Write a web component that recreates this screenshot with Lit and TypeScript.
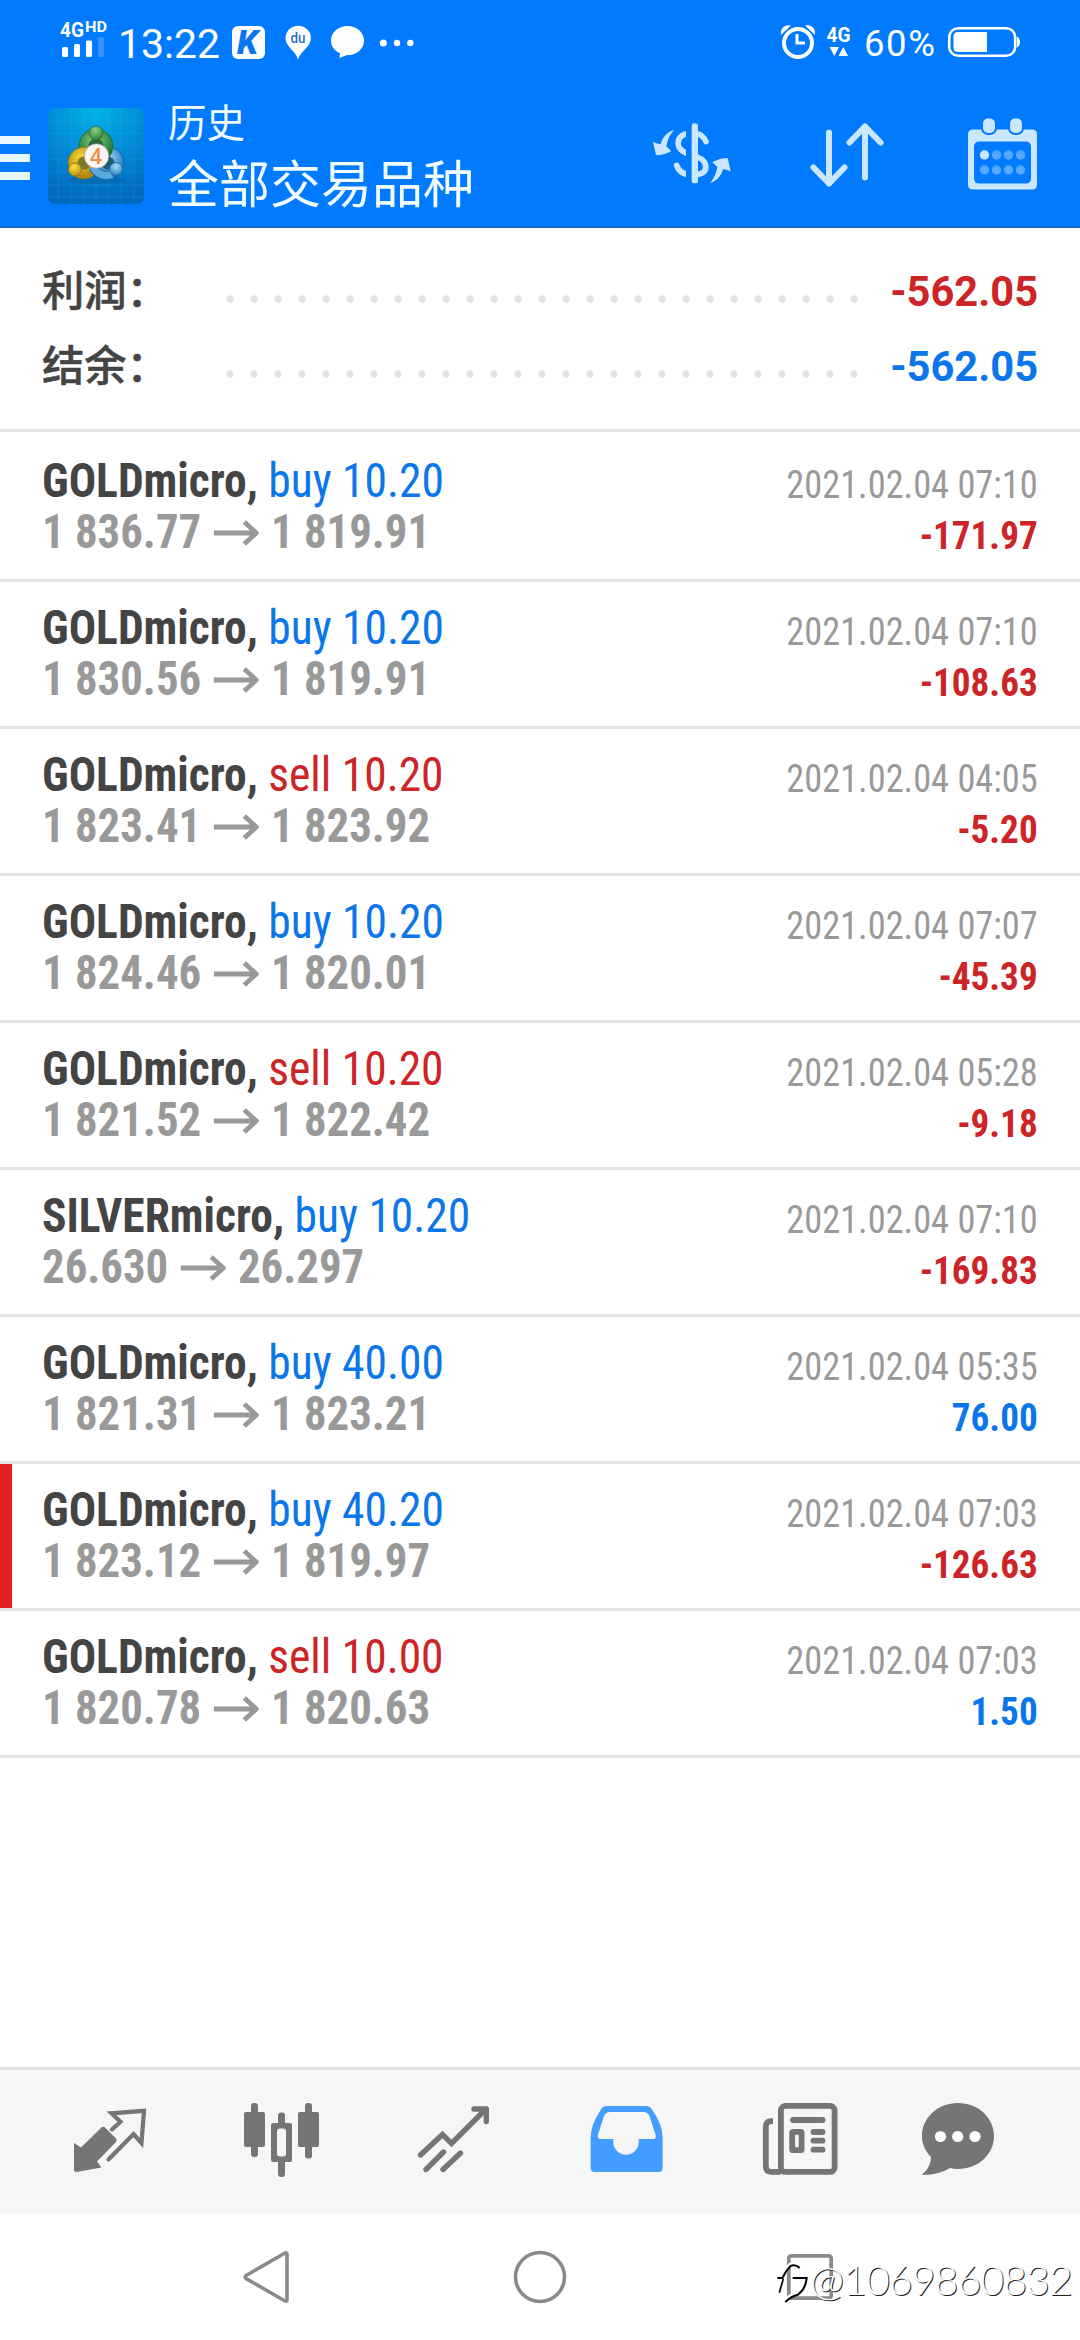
import { LitElement, html, css, svg } from "lit";
import { customElement, property } from "lit/decorators.js";
import { classMap } from "lit/directives/class-map.js";

interface Deal {
  symbol: string;
  side: "buy" | "sell";
  volume: string;
  open: string;
  close: string;
  time: string;
  profit: string;
  flagged?: boolean;
}

const DEALS: Deal[] = [
  { symbol: "GOLDmicro", side: "buy", volume: "10.20", open: "1 836.77", close: "1 819.91", time: "2021.02.04 07:10", profit: "-171.97" },
  { symbol: "GOLDmicro", side: "buy", volume: "10.20", open: "1 830.56", close: "1 819.91", time: "2021.02.04 07:10", profit: "-108.63" },
  { symbol: "GOLDmicro", side: "sell", volume: "10.20", open: "1 823.41", close: "1 823.92", time: "2021.02.04 04:05", profit: "-5.20" },
  { symbol: "GOLDmicro", side: "buy", volume: "10.20", open: "1 824.46", close: "1 820.01", time: "2021.02.04 07:07", profit: "-45.39" },
  { symbol: "GOLDmicro", side: "sell", volume: "10.20", open: "1 821.52", close: "1 822.42", time: "2021.02.04 05:28", profit: "-9.18" },
  { symbol: "SILVERmicro", side: "buy", volume: "10.20", open: "26.630", close: "26.297", time: "2021.02.04 07:10", profit: "-169.83" },
  { symbol: "GOLDmicro", side: "buy", volume: "40.00", open: "1 821.31", close: "1 823.21", time: "2021.02.04 05:35", profit: "76.00" },
  { symbol: "GOLDmicro", side: "buy", volume: "40.20", open: "1 823.12", close: "1 819.97", time: "2021.02.04 07:03", profit: "-126.63", flagged: true },
  { symbol: "GOLDmicro", side: "sell", volume: "10.00", open: "1 820.78", close: "1 820.63", time: "2021.02.04 07:03", profit: "1.50" },
];

@customElement("status-bar")
export class StatusBar extends LitElement {
  static styles = css`
    :host { display: flex; height: 84px; padding: 0 60px; align-items: flex-start; justify-content: space-between; color: #fff; font-family: Roboto, sans-serif; }
    svg { display: block; flex: none; overflow: visible; }
    .side { display: flex; height: 84px; align-items: center; }
    .clock { font-size: 41px; line-height: 84px; height: 84px; margin: 4px 0 0 10px; width: 102px; letter-spacing: 0; }
    .percent { font-size: 36.500px; line-height: 84px; height: 84px; margin: 3px 0 0 12px; width: 83px; letter-spacing: 1.600px; }
    .net { font: 700 21px Roboto, sans-serif; fill: #fff; }
    .hd { font: 700 14px Roboto, sans-serif; fill: #fff; }
    .k { font: italic 900 33px Roboto, sans-serif; fill: #0a74f5; }
    .du { font: 500 15px Roboto, sans-serif; fill: #2a6fc0; }
  `;
  render() {
    return html`
      <div class="side">
        <svg width="48" height="84" viewBox="60 0 48 84" fill="#fff">
          <text class="net" x="60" y="37" textLength="24" lengthAdjust="spacingAndGlyphs">4G</text>
          <text class="hd" x="85" y="32" textLength="22" lengthAdjust="spacingAndGlyphs">HD</text>
          <rect x="62" y="47" width="6" height="10" rx="1.5" />
          <rect x="74" y="44" width="6" height="13" rx="1.5" />
          <rect x="86" y="40.5" width="6" height="16.5" rx="1.5" />
          <rect x="98" y="37" width="6" height="20" rx="1" opacity=".2" />
        </svg>
        <span class="clock">13:22</span>
        <svg width="200" height="84" viewBox="220 0 200 84" fill="#fff">
          <rect x="232" y="26" width="33" height="33" rx="6" />
          <text class="k" x="237" y="53.5" textLength="21" lengthAdjust="spacingAndGlyphs">K</text>
          <path d="M298 59.5C296 51 285.5 47 285.5 38a12.7 12.3 0 0 1 25.4 0C311 47 300.500 51 298 59.500Z" />
          <text class="du" x="290.500" y="42.500" textLength="15" lengthAdjust="spacingAndGlyphs">du</text>
          <path d="M347.500 26c9.500 0 16.500 6.500 16.500 14.500S357 55 349 55c-2 0-3.500.3-9.500 3.300l.5-5C335 51 331 47 331 40.500 331 32.500 338 26 347.500 26Z" />
          <circle cx="383.300" cy="43" r="3.500" /><circle cx="397" cy="43" r="3.200" /><circle cx="410.300" cy="43" r="3.200" />
        </svg>
      </div>
      <div class="side">
        <svg width="72" height="84" viewBox="780 0 72 84" fill="#fff">
          <circle cx="798" cy="43" r="14" fill="none" stroke="#fff" stroke-width="4" />
          <path d="M797 34v9h8" fill="none" stroke="#fff" stroke-width="3" />
          <path d="M781 35c-1-7 4-11 10-9.500ZM815 35c1-7-4-11-10-9.500Z" />
          <text class="net" x="826.500" y="42" font-size="21" textLength="24" lengthAdjust="spacingAndGlyphs">4G</text>
          <path d="M829.500 47h9.500l-4.700 9ZM838.500 56h9.500l-4.700-9Z" />
        </svg>
        <span class="percent">60%</span>
        <svg width="73" height="84" viewBox="947 0 73 84">
          <rect x="949.200" y="28.200" width="66" height="27.600" rx="9" fill="none" stroke="#fff" stroke-width="2.600" />
          <path d="M958 32h29v20h-29q-4.500 0-4.500-4.500v-11Q953.500 32 958 32Z" fill="#fff" />
          <path d="M1017 36.500q3 1.500 3 5.500t-3 5.500Z" fill="#fff" />
        </svg>
      </div>
    `;
  }
}

@customElement("app-header")
export class AppHeader extends LitElement {
  static styles = css`
    :host { display: flex; height: 142px; align-items: center; color: #f2fbff; font-family: "Noto Sans CJK SC", sans-serif; border-bottom: 2px solid #1a66cc; box-sizing: content-box; }
    svg { display: block; flex: none; overflow: visible; }
    .menu { display: flex; flex-direction: column; gap: 10px; width: 30px; margin: 5px 18px 0 0; }
    .bar { height: 8px; background: #e6f7ff; }
    .logo { margin-top: 1px; }
    .titles { display: flex; flex-direction: column; margin: -5px 0 0 24px; flex: 1; font-weight: 400; }
    .small { font-size: 38.500px; line-height: 54px; }
    .large { font-size: 51px; line-height: 64px; margin-top: 2px; }
    .actions { display: flex; align-items: center; margin-right: 42px; }
    .sort { margin: 0 83px 0 77px; }
    .four { font: 600 21px "Open Sans", sans-serif; fill: #f08a3c; }
  `;
  render() {
    return html`
      <div class="menu"><div class="bar"></div><div class="bar"></div><div class="bar"></div></div>
      <svg class="logo" width="96" height="96" viewBox="0 0 96 96">
        <defs>
          <radialGradient id="bg" cx=".5" cy="0" r="1"><stop offset="0" stop-color="#00b4e8" /><stop offset=".55" stop-color="#0288d6" /><stop offset="1" stop-color="#0068c0" /></radialGradient>
          <radialGradient id="g" cx=".45" cy=".3" r=".8"><stop offset="0" stop-color="#8fd07a" /><stop offset="1" stop-color="#1c7a3a" /></radialGradient>
          <radialGradient id="y" cx=".4" cy=".3" r=".8"><stop offset="0" stop-color="#ffe03a" /><stop offset="1" stop-color="#b08a10" /></radialGradient>
          <radialGradient id="b" cx=".5" cy=".3" r=".8"><stop offset="0" stop-color="#a5dcf8" /><stop offset="1" stop-color="#1f78c0" /></radialGradient>
        </defs>
        <rect width="96" height="96" rx="7" fill="url(#bg)" />
        <path d="M10 0v96M23 0v96M36 0v96M48 0v96M60 0v96M73 0v96M86 0v96M0 12h96M0 25h96M0 38h96M0 51h96M0 64h96M0 77h96M0 89h96" stroke="#6fd0ff" stroke-opacity=".13" fill="none" />
        <ellipse cx="49" cy="72" rx="30" ry="4" fill="#045a9c" opacity=".4" />
        <circle cx="60" cy="55" r="11" fill="#1d5f70" stroke="#1b5f98" stroke-width="10.500" />
        <circle cx="60" cy="55" r="11" fill="none" stroke="url(#b)" stroke-width="8.800" />
        <circle cx="48" cy="38" r="12" fill="#2a6a3a" stroke="#2c6a2c" stroke-width="10.500" />
        <circle cx="48" cy="38" r="12" fill="none" stroke="url(#g)" stroke-width="8.800" />
        <circle cx="36" cy="55" r="11" fill="#7a7a28" stroke="#8a7414" stroke-width="10.500" />
        <circle cx="36" cy="55" r="11" fill="none" stroke="url(#y)" stroke-width="8.800" />
        <path d="M45 59A15 14 0 0 0 62 67" fill="none" stroke="#1b5f98" stroke-width="9" />
        <path d="M45 59A15 14 0 0 0 64 66.500" fill="none" stroke="#5ba9de" stroke-width="7.400" />
        <circle cx="48" cy="25" r="7" fill="url(#g)" stroke="#2c6a2c" stroke-width=".8" />
        <circle cx="27" cy="61.500" r="6.500" fill="url(#y)" stroke="#8a7414" stroke-width=".8" />
        <circle cx="68" cy="61" r="6.500" fill="url(#b)" stroke="#1b62a0" stroke-width=".8" />
        <circle cx="48.500" cy="48" r="12.300" fill="#f7f7f5" stroke="#9a8f80" stroke-width=".7" />
        <text class="four" x="48" y="55.500" text-anchor="middle">4</text>
      </svg>
      <div class="titles"><span class="small">历史</span><span class="large">全部交易品种</span></div>
      <div class="actions">
        <svg width="80" height="70" viewBox="30 32 240 210" fill="#cbe6ff">
          <path d="M192 97C184 78 170 71 152 71 124 71 108.500 82 108.500 102 108.500 124 130 131 152 138 178 146 191.500 154 191.500 174 191.500 188 178 197 152 197 124 197 110 186 104 168" fill="none" stroke="#cbe6ff" stroke-width="17" stroke-linecap="round" />
          <rect x="132" y="50" width="18" height="165" fill="#007aff" />
          <rect x="149" y="42" width="19" height="180" rx="8" />
          <path d="M96 62C76 68 62 82 56 104 48 104 38 100 33 98L42 138C55 138 75 134 88 125 82 120 78 115 73 112 77 92 82 78 96 62Z" />
          <path transform="rotate(180 149.500 142)" d="M96 62C76 68 62 82 56 104 48 104 38 100 33 98L42 138C55 138 75 134 88 125 82 120 78 115 73 112 77 92 82 78 96 62Z" />
        </svg>
        <svg class="sort" width="76" height="70" viewBox="808 120.500 76 70" fill="none" stroke="#cbe6ff" stroke-width="6" stroke-linecap="round" stroke-linejoin="round">
          <path d="M828 133v51M812.500 168 828 184l15.500-16M864 178v-51M848.500 143 864 127l15.500 16" />
        </svg>
        <svg width="70" height="72" viewBox="968 119.500 70 72" fill="#cbe6ff">
          <path fill-rule="evenodd" d="M973 130h59q5 0 5 5v50q0 5-5 5h-59q-5 0-5-5v-50q0-5 5-5Zm6.500 12q-5.500 0-5.500 5.500v31q0 5.500 5.500 5.500h46q5.500 0 5.500-5.500v-31q0-5.500-5.500-5.500Z" />
          <g stroke="#007aff" stroke-width="4" paint-order="stroke"><rect x="983" y="119" width="12" height="14.500" rx="5" /><rect x="1010" y="119" width="12" height="14.500" rx="5" /></g>
          <circle cx="984.500" cy="155.500" r="4.700" />
          <g fill="#55a7ff">${[996.5, 1008.5, 1020.5].map((x) => svg`<circle cx=${x} cy="155.500" r="4.700" />`)}
          ${[984.5, 996.5, 1008.5, 1020.5].map((x) => svg`<circle cx=${x} cy="170.500" r="4.700" />`)}</g>
        </svg>
      </div>
    `;
  }
}

@customElement("summary-row")
export class SummaryRow extends LitElement {
  @property() label = "";
  @property() value = "";
  @property() tone = "loss";
  static styles = css`
    :host { display: flex; height: 75px; align-items: center; padding: 0 42px; }
    .label { width: 183px; margin-top: -5px; font: 500 42.300px/75px "Noto Sans CJK SC", sans-serif; -webkit-text-stroke: 0.500px #444; color: #444; white-space: nowrap; margin-right: -7px; }
    .dots { width: 648px; height: 8px; margin-top: 18px; background: radial-gradient(circle at 12px 4px, #e2e2e2 3.300px, transparent 4px) 0 0 / 24px 8px; }
    .value { flex: 1; margin-top: 4px; text-align: right; font: 700 41.600px/75px Roboto, sans-serif; color: #cc2427; }
    .gain { color: #0a76ea; }
  `;
  render() {
    return html`<span class="label">${this.label}</span><span class="dots"></span><span class="value ${this.tone}">${this.value}</span>`;
  }
}

@customElement("deal-row")
export class DealRow extends LitElement {
  @property({ attribute: false }) deal!: Deal;
  static styles = css`
    :host { display: block; font-family: "Roboto Condensed", Roboto, sans-serif; font-stretch: 75%; }
    .row { display: flex; justify-content: space-between; box-sizing: border-box; height: 147px; padding: 21px 42px 0; border-bottom: 3px solid #e3e3e3; position: relative; }
    .flag { position: absolute; left: 0; top: 0; width: 12px; height: 144px; background: #e3201f; }
    .main { font-size: 47.500px; }
    .line { display: flex; align-items: center; height: 51px; line-height: 51px; white-space: pre; transform: scaleX(0.958); transform-origin: left; }
    .symbol { font-weight: 700; color: #444; }
    .buy, .gain { color: #0a76ea; }
    .sell, .loss { color: #cc2427; }
    .prices { font-weight: 700; color: #999; transform: scaleX(0.943); }
    .arrow { margin: 1px 12px 0 13px; display: block; }
    .meta { font-size: 39px; text-align: right; margin-top: 4px; }
    .when, .profit { height: 51px; line-height: 51px; transform-origin: right; }
    .when { color: #999; transform: scaleX(0.932); }
    .profit { font-weight: 700; transform: scaleX(0.952); }
  `;
  render() {
    const d = this.deal;
    return html`<div class="row">
      ${d.flagged ? html`<div class="flag"></div>` : ""}
      <div class="main">
        <div class="line"><span class="symbol">${d.symbol}, </span><span class=${d.side}>${d.side} ${d.volume}</span></div>
        <div class="line prices"><span>${d.open}</span><svg class="arrow" width="49" height="26" viewBox="0 0 46 26" preserveAspectRatio="none" fill="none" stroke="#999" stroke-width="4.800"><path d="M0 13h42M30.500 2 42.500 13 30.500 24" stroke-linejoin="round" /></svg><span>${d.close}</span></div>
      </div>
      <div class="meta">
        <div class="when">${d.time}</div>
        <div class="profit ${classMap({ loss: d.profit.startsWith("-"), gain: !d.profit.startsWith("-") })}">${d.profit}</div>
      </div>
    </div>`;
  }
}

@customElement("tab-bar")
export class TabBar extends LitElement {
  static styles = css`
    :host { display: flex; justify-content: space-between; align-items: flex-start; box-sizing: border-box; height: 146px; padding: 30px 70px 0; background: #f6f6f6; border-top: 3px solid #e0e0e0; }
    svg { display: block; overflow: visible; }
  `;
  render() {
    return html`
      <svg width="80" height="80" viewBox="70 2100 80 80" fill="#757575">
        <path d="M74 2143 81 2147.500 101.500 2127.500Q103.500 2126 105.500 2128L116 2138.500Q117.500 2140.300 116 2142L97 2161.500 101.500 2167.500 76.500 2172Q74 2172 74 2170Z" />
        <path d="M112 2129.500 120.500 2121.700 111.500 2113.300 144 2110.800 141.500 2143 133.600 2134 108.500 2159.500" fill="none" stroke="#757575" stroke-width="4.200" stroke-linecap="round" />
      </svg>
      <svg width="80" height="80" viewBox="242 2100 80 80" fill="#757575">
        <rect x="251" y="2103" width="7" height="54" rx="3" /><rect x="244" y="2112" width="21" height="35" rx="2" />
        <rect x="305" y="2103" width="7" height="55.500" rx="3" /><rect x="298" y="2112" width="21" height="35" rx="2" />
        <rect x="278" y="2112.500" width="7" height="64.500" rx="3" /><rect x="271" y="2123" width="21" height="39" rx="2" />
        <rect x="277" y="2128.500" width="9" height="28" rx="3" fill="#f6f6f6" />
      </svg>
      <svg width="80" height="80" viewBox="414 2100 80 80" fill="none" stroke="#757575" stroke-width="5.400" stroke-linecap="round">
        <path d="M420.500 2155 442.500 2134.500 451.500 2143.500 486 2109" />
        <path d="M474 2109H486.300V2121.500" stroke-linejoin="round" />
        <path d="M443.500 2152 426 2169.500M460.500 2153 443 2169.500" />
      </svg>
      <svg width="80" height="80" viewBox="586 2100 80 80" fill="#439cff">
        <path fill-rule="evenodd" d="M607 2106h38.500q5 0 7.500 5 9.600 14 9.600 27v30q0 4-4 4h-64q-4 0-4-4v-30q0-13 9.500-27 2-5 6.900-5Zm3.500 6q-5 0-6.500 4l-6 18.500q-1 4.500 3 4.500h12.300v3a12.700 12.700 0 0 0 25.400 0v-3h14q4 0 2.800-4.500l-6-18.500q-1.500-4-6.500-4Z" />
      </svg>
      <svg width="80" height="80" viewBox="758 2100 80 80" fill="none" stroke="#757575" stroke-width="5.800">
        <rect x="780.900" y="2105.900" width="53.700" height="66" rx="4.500" />
        <path d="M773 2121.200h-1.500q-5.700 0-5.700 5.700v39q0 6 6 6h9" />
        <path d="M793 2120h29.500M813.500 2132h9M813.500 2140.700h9M813.500 2149.700h9" stroke-linecap="round" />
        <rect x="792.200" y="2131.900" width="9.400" height="18.300" rx="1" />
      </svg>
      <svg width="80" height="80" viewBox="930 2100 80 80" fill="#757575">
        <path d="M958 2103c20 0 36 14.500 36 33s-16 33-36 33q-4.500 0-8-1-10 6.500-27 7-1-.5 0-1.500c5-4 8-10 8-16.500-6-6-9-13-9-21 0-18.500 16-33 36-33Z" />
        <g fill="#fff"><circle cx="940.500" cy="2136.500" r="5.600" /><circle cx="957.700" cy="2136.500" r="5.600" /><circle cx="975" cy="2136.500" r="5.600" /></g>
      </svg>
    `;
  }
}

@customElement("nav-bar")
export class NavBar extends LitElement {
  static styles = css`
    :host { display: flex; height: 127px; align-items: center; justify-content: space-between; padding: 0 240px; background: #fff; position: relative; }
    svg { display: block; overflow: visible; }
    .mark { position: absolute; left: 776px; top: 31px; display: flex; align-items: center; height: 72px; }
    .mark svg { margin-top: 6px; }
    .id { font: 300 41px/72px Lato, sans-serif; letter-spacing: -0.900px; color: #fff; text-shadow: 1px 1px 0 #222; white-space: nowrap; }
  `;
  render() {
    return html`
      <svg width="60" height="60" viewBox="240 2247 60 60" fill="none" stroke="#8a8a8a" stroke-width="3.600"><path d="M246 2275.500 285 2253q2-1 2 1.500v45q0 2.500-2 1.500l-39-22.500q-1.500-1.500 0-3Z" /></svg>
      <svg width="60" height="60" viewBox="510 2247 60 60" fill="none" stroke="#8a8a8a" stroke-width="3.600"><circle cx="540" cy="2277" r="24.500" /></svg>
      <svg width="60" height="60" viewBox="780 2247 60 60" fill="none" stroke="#8a8a8a" stroke-width="3.800"><rect x="788.800" y="2255.800" width="42.400" height="42.400" rx="2.500" /></svg>
      <div class="mark">
        <svg width="34" height="42" viewBox="18 70 102 126" fill="none" stroke-linecap="butt">
          <path d="M18 112H34Q46 92 58 78 74 72 88 86M66 112H108Q106 144 82 164 62 168 44 184M36 114 24 156" stroke="#fff" stroke-width="9" />
          <path d="M22 118H37Q48 96 60 83 75 75 89 88" stroke="#000" stroke-width="6" />
          <path d="M40 120 28 162" stroke="#000" stroke-width="5" />
          <path d="M68 118H110Q108 150 84 168 64 172 46 190" stroke="#000" stroke-width="6" />
        </svg>
        <span class="id">@1069860832</span>
      </div>
    `;
  }
}

@customElement("app-root")
export class AppRoot extends LitElement {
  static styles = css`
    :host { display: flex; flex-direction: column; width: 1080px; height: 2340px; background: #fff; overflow: hidden; }
    .top { background: #007aff; height: 228px; flex: none; }
    .summary { padding: 24px 0 27px; border-bottom: 3px solid #e3e3e3; flex: none; }
    .deals { padding-top: 3px; flex: 1; }
    tab-bar, nav-bar { flex: none; }
  `;
  render() {
    return html`
      <div class="top"><status-bar></status-bar><app-header></app-header></div>
      <div class="summary">
        <summary-row label="利润：" value="-562.05" tone="loss"></summary-row>
        <summary-row label="结余：" value="-562.05" tone="gain"></summary-row>
      </div>
      <div class="deals">${DEALS.map((d) => html`<deal-row .deal=${d}></deal-row>`)}</div>
      <tab-bar></tab-bar>
      <nav-bar></nav-bar>
    `;
  }
}
